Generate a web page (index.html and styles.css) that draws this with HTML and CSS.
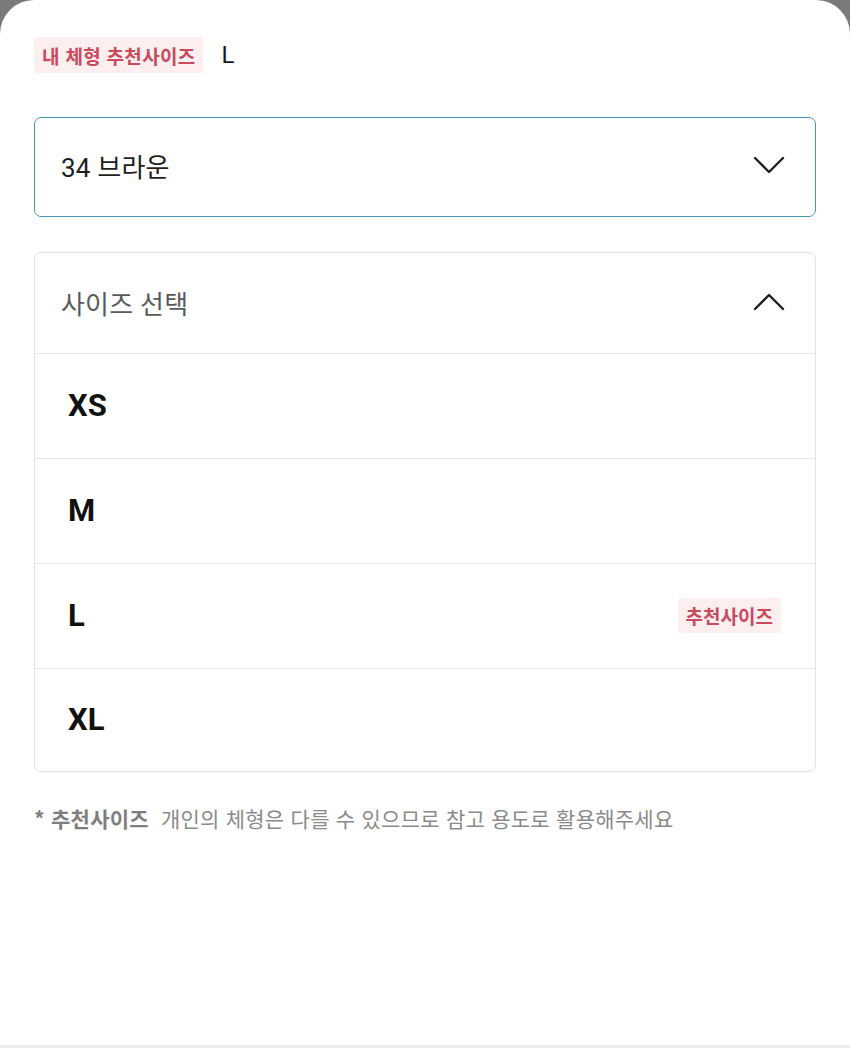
FILE: index.html
```html
<!DOCTYPE html>
<html lang="ko">
<head>
<meta charset="utf-8">
<link rel="stylesheet" href="styles.css">
</head>
<body>
<div class="sheet">
  <div class="body-rec">
    <span class="tag tag-lg">내 체형 추천사이즈</span>
    <span class="rec-size">L</span>
  </div>

  <div class="select select-active">
    <span class="select-value">34 브라운</span>
    <svg class="chev" viewBox="0 0 32 18" width="32" height="18"><path d="M2 2 L16 16 L30 2" fill="none" stroke="#1f1f1f" stroke-width="2.4" stroke-linecap="round" stroke-linejoin="round"/></svg>
  </div>

  <div class="select-list">
    <div class="list-head">
      <span class="placeholder">사이즈 선택</span>
      <svg class="chev" viewBox="0 0 32 18" width="32" height="18"><path d="M2 16 L16 2 L30 16" fill="none" stroke="#1f1f1f" stroke-width="2.4" stroke-linecap="round" stroke-linejoin="round"/></svg>
    </div>
    <div class="option"><span class="opt-label">XS</span></div>
    <div class="option"><span class="opt-label">M</span></div>
    <div class="option"><span class="opt-label">L</span><span class="tag tag-sm">추천사이즈</span></div>
    <div class="option"><span class="opt-label">XL</span></div>
  </div>

  <p class="note"><span class="note-strong">* 추천사이즈</span>개인의 체형은 다를 수 있으므로 참고 용도로 활용해주세요</p>

  <div class="spacer"></div>
  <div class="bottom-bar"></div>
</div>
</body>
</html>
```

FILE: styles.css
```css
* { box-sizing: border-box; }

html, body {
  margin: 0;
  padding: 0;
  height: 1048px;
  overflow: hidden;
}

body {
  background: #7a7a7a;
  font-family: Roboto, "Noto Sans CJK KR", sans-serif;
  color: #1f1f1f;
}

.sheet {
  height: 1048px;
  background: #ffffff;
  border-radius: 34px 34px 0 0;
  padding: 37px 34px 0;
  display: flex;
  flex-direction: column;
}

.body-rec {
  display: flex;
  align-items: center;
  gap: 18px;
  height: 36px;
}

.tag {
  background: #fdeff0;
  color: #c84a5c;
  font-weight: 700;
  font-family: "Noto Sans CJK KR", sans-serif;
  border-radius: 3px;
  display: inline-flex;
  align-items: center;
}

.tag-lg {
  height: 36px;
  font-size: 19px;
  padding: 0 8px;
  letter-spacing: 0.3px;
}

.rec-size {
  font-size: 24px;
  font-weight: 400;
  color: #1a1a1a;
}

.select {
  margin-top: 44px;
  height: 100px;
  border: 1.5px solid #4a93b4;
  border-radius: 7px;
  display: flex;
  align-items: center;
  justify-content: space-between;
  padding: 0 30px 4px 26px;
}

.select-value {
  font-size: 26px;
  color: #1f1f1f;
  letter-spacing: 0.2px;
}

.chev { display: block; }

.select-list {
  margin-top: 35px;
  border: 1.5px solid #e2e2e2;
  border-radius: 7px;
  display: flex;
  flex-direction: column;
}

.list-head {
  height: 100px;
  display: flex;
  align-items: center;
  justify-content: space-between;
  padding: 0 30px 2px 26px;
}

.placeholder {
  font-size: 26px;
  color: #5a5a5a;
  letter-spacing: 0.2px;
}

.option {
  height: 105px;
  border-top: 1.5px solid #e6e6e6;
  display: flex;
  align-items: center;
  justify-content: space-between;
  padding: 0 34px 2px 33px;
}

.option:last-child { height: 103px; }

.opt-label {
  font-size: 31px;
  font-weight: 700;
  color: #111111;
  font-family: Roboto, "Liberation Sans", sans-serif;
}

.tag-sm {
  height: 35px;
  font-size: 19px;
  padding: 0 8px;
  letter-spacing: 0;
}

.note {
  margin: 32px 0 0;
  font-size: 21px;
  color: #8a8a8a;
  font-family: "Noto Sans CJK KR", sans-serif;
  line-height: 28px;
  letter-spacing: 0.25px;
}

.note-strong {
  font-weight: 700;
  color: #7e7e7e;
  margin-right: 12px;
}

.spacer { flex: 1; }

.bottom-bar {
  height: 3px;
  margin: 0 -34px;
  background: #ececec;
}
```
